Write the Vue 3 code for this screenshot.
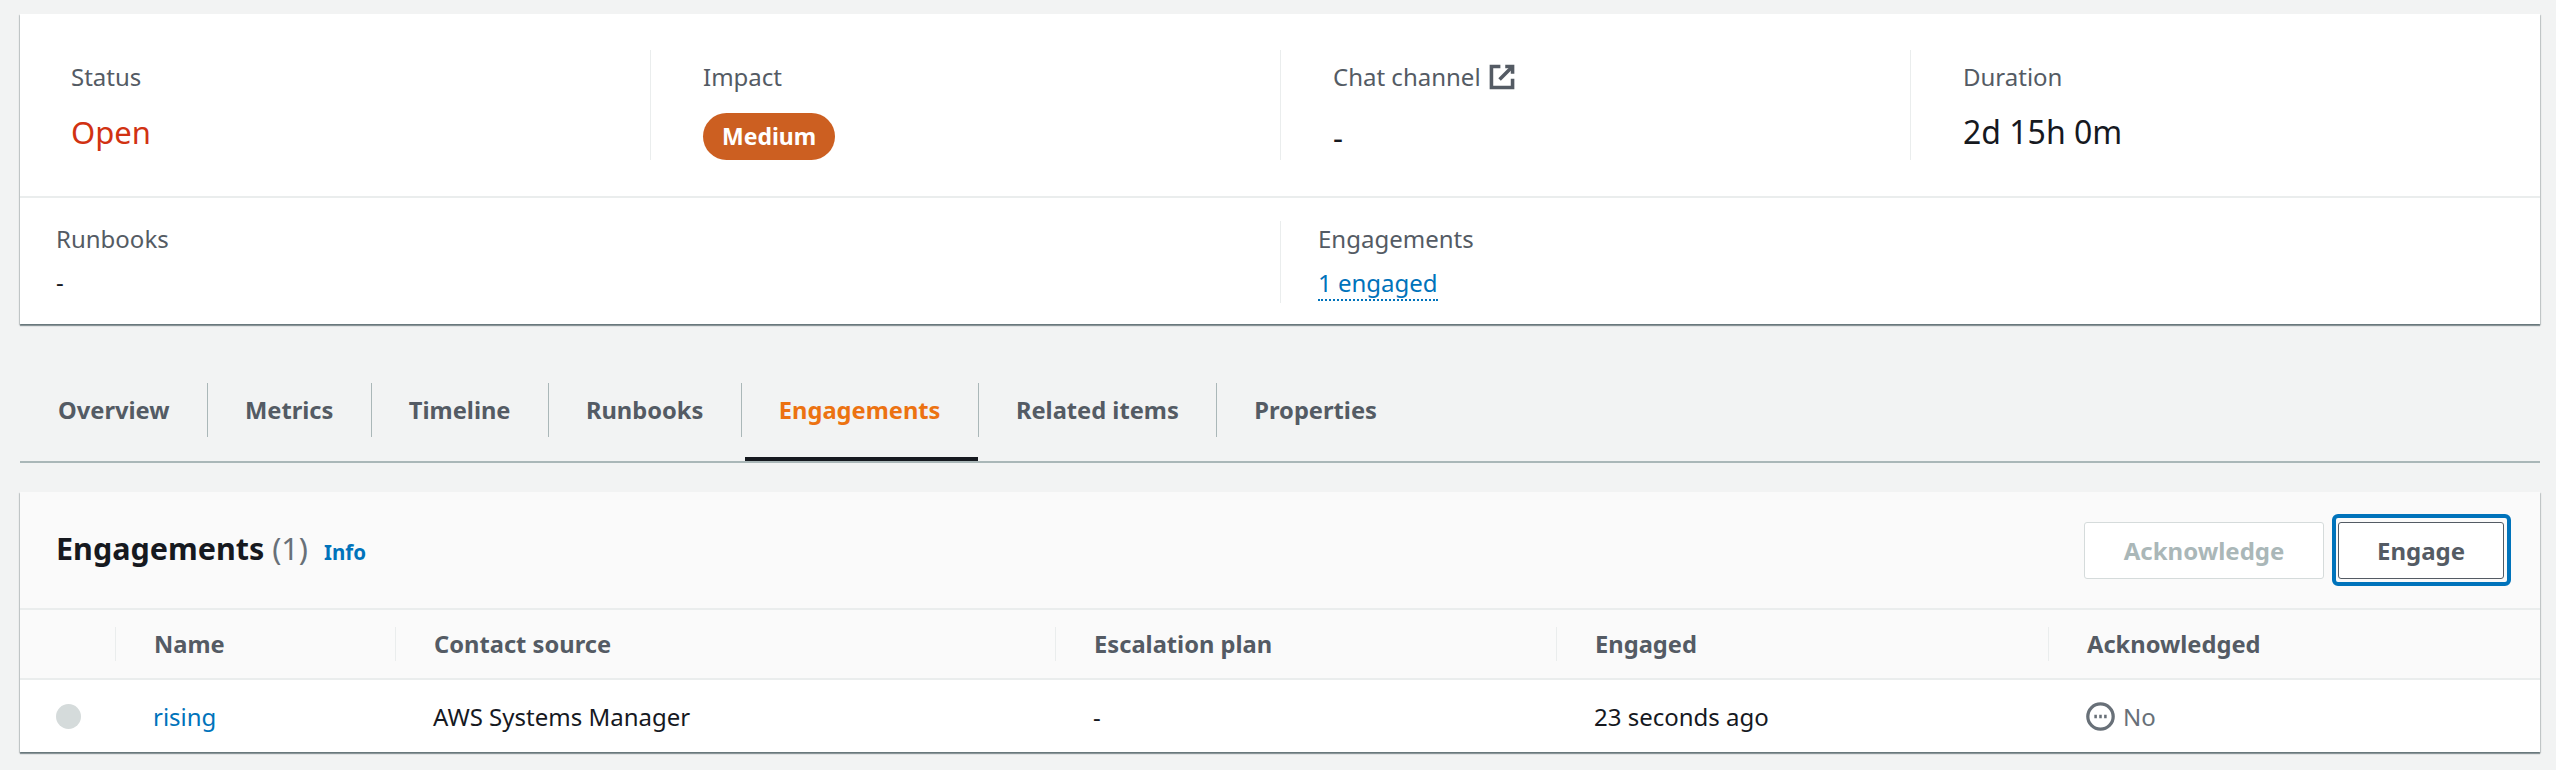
<template>
  <div class="page">
    <section class="card summary">
      <div class="stats">
        <div class="stat">
          <div class="label">Status</div>
          <div class="value open">Open</div>
        </div>
        <div class="stat">
          <div class="label">Impact</div>
          <span class="badge">Medium</span>
        </div>
        <div class="stat">
          <div class="label">
            Chat channel
            <svg class="ext" viewBox="0 0 16 16" fill="none" stroke="currentColor" stroke-width="2.2">
              <path d="M10 1.5h4.5V6" />
              <path d="M6.5 9.5l8-8" />
              <path d="M14.5 9v5.5h-13v-13H7" />
            </svg>
          </div>
          <div class="value dash">-</div>
        </div>
        <div class="stat">
          <div class="label">Duration</div>
          <div class="value duration">2d 15h 0m</div>
        </div>
      </div>
      <div class="details">
        <div class="detail">
          <div class="label">Runbooks</div>
          <div class="small">-</div>
        </div>
        <div class="detail">
          <div class="label">Engagements</div>
          <a class="small link">1 engaged</a>
        </div>
      </div>
    </section>

    <nav class="tabs">
      <a
        v-for="tab in tabs"
        :key="tab"
        class="tab"
        :class="{ active: tab === 'Engagements' }"
      >
        <span class="tab-text">{{ tab }}</span>
      </a>
    </nav>

    <section class="card engagements">
      <header class="head">
        <div class="title">
          <h2>Engagements <span class="count">(1)</span></h2>
          <a class="info">Info</a>
        </div>
        <div class="actions">
          <button class="btn" disabled>Acknowledge</button>
          <button class="btn focused">Engage</button>
        </div>
      </header>
      <div class="row th-row">
        <div class="cell"></div>
        <div v-for="col in columns" :key="col" class="cell th">{{ col }}</div>
      </div>
      <div class="row td-row">
        <div class="cell radio-cell"><span class="radio"></span></div>
        <div class="cell"><a class="name">rising</a></div>
        <div class="cell">AWS Systems Manager</div>
        <div class="cell">-</div>
        <div class="cell">23 seconds ago</div>
        <div class="cell pending">
          <svg class="pending-icon" viewBox="0 0 16 16" fill="none" stroke="currentColor" stroke-width="1.8">
            <circle cx="8" cy="8" r="7" />
            <path d="M4.6 8h1.4M7.3 8h1.4M10 8h1.4" />
          </svg>
          No
        </div>
      </div>
    </section>
  </div>
</template>

<script setup>
const tabs = ['Overview', 'Metrics', 'Timeline', 'Runbooks', 'Engagements', 'Related items', 'Properties']
const columns = ['Name', 'Contact source', 'Escalation plan', 'Engaged', 'Acknowledged']
</script>

<style>
body {
  background: #f2f3f3;
}
</style>

<style scoped>
.page {
  width: 2556px;
  height: 770px;
  padding: 14px 16px 0 20px;
  box-sizing: border-box;
  font-family: "Noto Sans", sans-serif;
  font-size: 24px;
  color: #16191f;
  overflow: hidden;
}

.card {
  background: #fff;
  box-shadow: 0 2px 1px 0 rgba(0, 28, 36, 0.4), 1px 1px 1px 0 rgba(0, 28, 36, 0.15), -1px 1px 1px 0 rgba(0, 28, 36, 0.15);
}

.stats {
  display: grid;
  grid-template-columns: repeat(4, 1fr);
  padding: 36px 0;
  border-bottom: 2px solid #eaeded;
}

.stat {
  height: 110px;
  padding: 12px 0 0 52px;
  box-sizing: border-box;
  border-left: 1px solid #eaeded;
}

.stat:first-child {
  border-left: none;
  padding-left: 51px;
}

.label {
  color: #545b64;
  line-height: 30px;
  display: flex;
  align-items: center;
  gap: 8px;
}

.value {
  font-size: 31px;
  line-height: 40px;
  margin-top: 20px;
}

.duration {
  font-size: 32px;
}

.open {
  color: #d13212;
}

.dash {
  margin-top: 25px;
}

.badge {
  display: inline-block;
  margin-top: 21px;
  height: 47px;
  line-height: 47px;
  padding: 0 19px;
  border-radius: 24px;
  background: #cc5f21;
  color: #fff;
  font-weight: 700;
  font-size: 23px;
}

.ext {
  width: 26px;
  height: 26px;
}

.details {
  display: grid;
  grid-template-columns: 1fr 1fr;
  height: 126px;
}

.detail {
  margin-top: 23px;
  height: 82px;
  padding: 3px 0 0 36px;
  box-sizing: border-box;
}

.detail + .detail {
  padding-left: 37px;
  border-left: 1px solid #eaeded;
}

.small {
  margin-top: 13px;
  line-height: 30px;
}

.link {
  display: inline-block;
  color: #0073bb;
  line-height: 32px;
  border-bottom: 2px dotted #0073bb;
}

.tabs {
  display: flex;
  height: 78px;
  margin-top: 59px;
  border-bottom: 2px solid #aab7b8;
}

.tab {
  height: 78px;
  font-size: 23.7px;
  font-weight: 700;
  color: #545b64;
  position: relative;
  display: flex;
}

.tab-text {
  display: block;
  height: 54px;
  line-height: 54px;
  padding: 0 37.2px;
  border-right: 1px solid #aab7b8;
}

.tab:first-child .tab-text {
  padding-left: 38px;
}

.tab:last-child .tab-text {
  border-right: none;
}

.tab.active {
  color: #ec7211;
}

.tab.active::after {
  content: "";
  position: absolute;
  left: 3px;
  right: 1px;
  bottom: 0;
  height: 4px;
  background: #16191f;
}

.engagements {
  margin-top: 29px;
}

.head {
  display: flex;
  justify-content: space-between;
  align-items: center;
  height: 118px;
  padding: 0 36px;
  box-sizing: border-box;
  background: #fafafa;
  border-bottom: 2px solid #eaeded;
}

.title {
  display: flex;
  align-items: baseline;
  gap: 16px;
  margin-top: -4px;
}

h2 {
  margin: 0;
  font-size: 30.5px;
  font-weight: 700;
}

.count {
  color: #687078;
  font-weight: 400;
}

.info {
  font-size: 20.5px;
  font-weight: 700;
  color: #0073bb;
}

.actions {
  display: flex;
  gap: 14px;
}

.btn {
  height: 57px;
  width: 240px;
  padding: 0;
  font: 700 24px "Noto Sans", sans-serif;
  background: #fff;
  border: 1px solid #d5dbdb;
  border-radius: 3px;
  color: #aab7b8;
}

.btn.focused {
  position: relative;
  width: 166px;
  color: #545b64;
  border-color: #545b64;
}

/* focus ring sits a bit further out top and bottom than at the sides */
.btn.focused::after {
  content: "";
  position: absolute;
  top: -9px;
  bottom: -8px;
  left: -7px;
  right: -8px;
  border: 4px solid #0073bb;
  border-radius: 6px;
}

.row {
  display: grid;
  grid-template-columns: 95px 280px 660px 501px 492px 492px;
  align-items: center;
}

.th-row {
  height: 70px;
  background: #fafafa;
  border-bottom: 2px solid #eaeded;
  box-sizing: border-box;
}

.th {
  height: 34px;
  line-height: 34px;
  padding-left: 38px;
  border-left: 1px solid #eaeded;
  font-size: 23.7px;
  font-weight: 700;
  color: #545b64;
}

.td-row {
  height: 72px;
  box-sizing: border-box;
}

.td-row .cell {
  padding-left: 38px;
}

.td-row .radio-cell {
  padding-left: 36px;
  display: flex;
}

.radio {
  width: 25px;
  height: 25px;
  border-radius: 50%;
  background: #d5dbdb;
}

.name {
  color: #0073bb;
}

.pending {
  display: flex;
  align-items: center;
  gap: 8px;
  color: #687078;
}

.pending-icon {
  width: 29px;
  height: 29px;
}
</style>
